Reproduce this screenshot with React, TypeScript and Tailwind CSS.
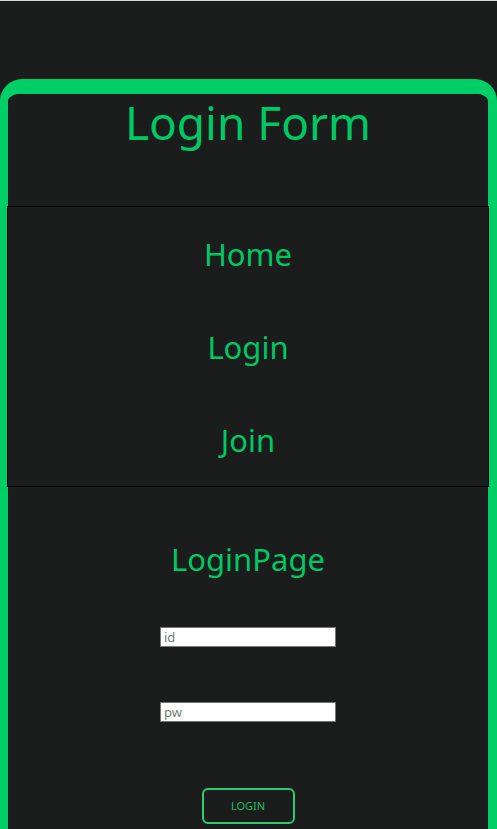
import React from 'react'

const navItems = ['Home', 'Login', 'Join']

export default function App() {
  return (
    <div
      className="min-h-screen bg-[#1b1c1c] border-t border-[#d9d9d9] overflow-hidden"
      style={{ fontFamily: '"Noto Sans", "Open Sans", sans-serif' }}
    >
      <div className="mt-[78px] border-l-8 border-r-[9px] border-t-[15px] border-[#00cf68] rounded-t-[22px] bg-[#1b1c1c]">
        <div className="rounded-t-[10px] bg-[#1b1c1c]">
          {/* title */}
          <h1 className="h-[112px] text-center text-[46px] leading-[56px] text-[#00c864] font-normal">
            Login Form
          </h1>

          {/* nav */}
          <nav className="-mx-[1px] border border-black">
            {navItems.map((item) => (
              <div
                key={item}
                className="h-[93px] flex items-center justify-center pt-[2px] text-[31px] text-[#00c864]"
              >
                {item}
              </div>
            ))}
          </nav>

          {/* login page */}
          <div className="flex flex-col items-center pt-[48px] pb-[5px]">
            <h2 className="h-[48px] flex items-center text-[31px] text-[#00c864]">LoginPage</h2>
            <input
              className="mt-[44px] w-[176px] h-[20px] bg-white border border-[#767676] px-[3px] text-[13px] placeholder:text-[#6f7f74] outline-none"
              placeholder="id"
            />
            <input
              className="mt-[55px] w-[176px] h-[20px] bg-white border border-[#767676] px-[3px] text-[13px] placeholder:text-[#6f7f74] outline-none"
              placeholder="pw"
              type="password"
            />
            <button className="mt-[66px] w-[93px] h-[36px] border-2 border-[#2ecc71] rounded-[6px] text-[11px] text-[#1fbf5c] bg-transparent">
              LOGIN
            </button>
          </div>
        </div>
      </div>
    </div>
  )
}
